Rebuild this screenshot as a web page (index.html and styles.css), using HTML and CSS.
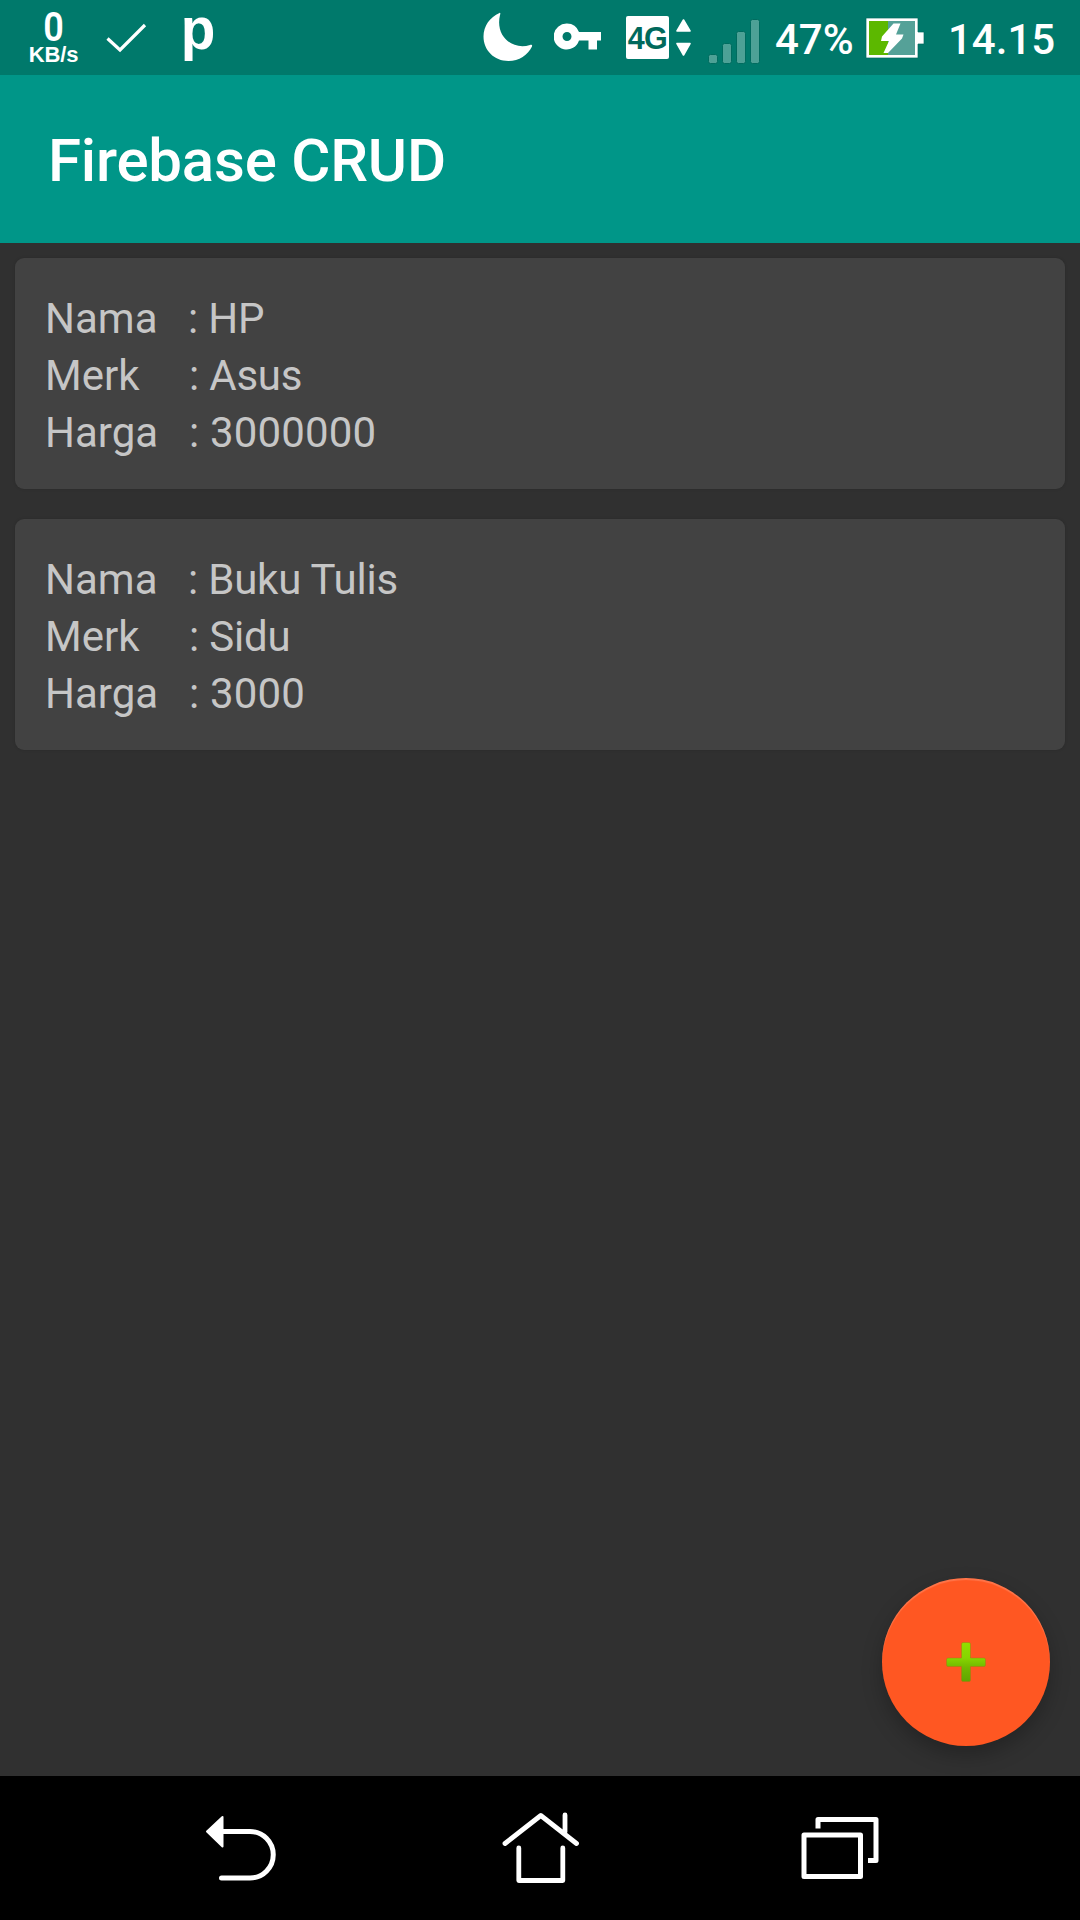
FILE: index.html
```html
<!DOCTYPE html>
<html lang="id">
<head>
<meta charset="utf-8">
<title>Firebase CRUD</title>
<link rel="stylesheet" href="styles.css">
</head>
<body>
<div class="screen">
  <div class="status-bar">
    <div class="net-speed"><span class="net-value">0</span><span class="net-unit">KB/s</span></div>
    <svg class="icon-check" width="42" height="75" viewBox="105 0 42 75"><path d="M107.5 38.5 120 50 145 25" fill="none" stroke="#fff" stroke-width="3.2"/></svg>
    <span class="app-letter">p</span>
    <div class="spacer"></div>
    <svg class="icon-moon" width="50" height="75" viewBox="483 0 50 75"><path d="M499.5 13C490 17 483.5 26 483.5 36.500C483.500 50 494 61 508.500 61C519 61 528 55 532 46.500C532.500 45 531.500 44.500 530 45C512 50.500 495 36 500 15C500.500 13.500 500.500 12.500 499.500 13Z" fill="#fff"/></svg>
    <svg class="icon-key" width="48" height="75" viewBox="554 0 48 75"><path fill="#fff" fill-rule="evenodd" d="M567 23.500A13 13 0 0 1 579 32H601V40.500H597V49.500H588.500V40.500H579A13 13 0 1 1 567 23.500ZM567 32A4.500 4.500 0 1 0 567 41A4.500 4.500 0 1 0 567 32Z"/></svg>
    <div class="network">4G</div>
    <svg class="icon-data" width="17" height="75" viewBox="675 0 17 75"><path d="M683.500 20 690 31H677ZM677 43.500H690L683.500 55Z" fill="#fff" stroke="#fff" stroke-width="1.600" stroke-linejoin="round"/></svg>
    <svg class="icon-signal" width="54" height="75" viewBox="707 0 54 75"><g fill="#4da196" stroke="#006c5f"><rect x="708.500" y="54.500" width="9" height="9" rx="2"/><rect x="722.500" y="43.500" width="9" height="20" rx="2"/><rect x="736.500" y="31.500" width="9" height="32" rx="2"/><rect x="750.500" y="19.500" width="9" height="44" rx="2"/></g></svg>
    <span class="percent">47%</span>
    <svg class="icon-battery" width="60" height="75" viewBox="865 0 60 75"><path d="M866 18H918V32H924V44H918V58H866Z" fill="#fff" stroke="#006c5f" stroke-width=".7"/><path d="M869 21H888V55H869Z" fill="#5cb800"/><path d="M888 21H915V55H888Z" fill="#55a198"/><path d="M893.500 23.500H900.500L896 34.500H903.500L902 38.500 888 53H883.500L889 41H881L882 36.500Z" fill="#fff"/></svg>
    <span class="clock">14.15</span>
  </div>
  <header class="app-bar"><h1 class="title">Firebase CRUD</h1></header>
  <main class="content">
    <article class="card">
      <div class="row"><span class="label">Nama</span><span class="value first">: HP</span></div>
      <div class="row"><span class="label">Merk</span><span class="value">: Asus</span></div>
      <div class="row"><span class="label">Harga</span><span class="value number">: 3000000</span></div>
    </article>
    <article class="card">
      <div class="row"><span class="label">Nama</span><span class="value first">: Buku Tulis</span></div>
      <div class="row"><span class="label">Merk</span><span class="value">: Sidu</span></div>
      <div class="row"><span class="label">Harga</span><span class="value number">: 3000</span></div>
    </article>
    <button class="fab" aria-label="Tambah">
      <svg width="42" height="42" viewBox="945 1641 42 42"><defs><linearGradient id="plus" x1="0" y1="0" x2="0" y2="1"><stop offset="0" stop-color="#91e000"/><stop offset=".4" stop-color="#87d400"/><stop offset=".65" stop-color="#70b800"/><stop offset="1" stop-color="#60a500"/></linearGradient></defs><path d="M963 1642.500H969Q970.500 1642.500 970.500 1644V1658H984Q985.500 1658 985.500 1659.500V1665Q985.500 1666.500 984 1666.500H970.500V1680Q970.500 1681.500 969 1681.500H963Q961.500 1681.500 961.500 1680V1666.500H948Q946.500 1666.500 946.500 1665V1659.500Q946.500 1658 948 1658H961.500V1644Q961.500 1642.500 963 1642.500Z" fill="url(#plus)" stroke="#a07a10" stroke-opacity=".6" stroke-width=".8"/></svg>
    </button>
  </main>
  <nav class="nav-bar">
    <svg width="80" height="80" viewBox="200 1806 80 80"><path d="M222 1831.500H250A23.250 23.250 0 0 1 250 1878H221.500" fill="none" stroke="#fff" stroke-width="5" stroke-linecap="round"/><path d="M207 1831.500 222.500 1817V1846.500Z" fill="#fff" stroke="#fff" stroke-width="2" stroke-linejoin="round"/></svg>
    <svg width="80" height="80" viewBox="500 1806 80 80"><path d="M505 1843.500 540.800 1815.500 576.500 1843.500M565 1815V1832M518.800 1848V1880.500H562.800V1848" fill="none" stroke="#fff" stroke-width="4.800" stroke-linecap="round" stroke-linejoin="round"/></svg>
    <svg width="80" height="80" viewBox="800 1806 80 80"><path d="M804 1835H860.500V1876.500H804ZM818 1828.500V1819.500H876V1860.500H868" fill="none" stroke="#fff" stroke-width="5" stroke-linejoin="round"/></svg>
  </nav>
</div>
</body>
</html>
```
FILE: styles.css
```css
* { box-sizing: border-box; }

body {
  margin: 0;
  background: #303030;
  font-family: Roboto, sans-serif;
}

svg { display: block; flex: none; }

.screen {
  display: flex;
  flex-direction: column;
  width: 1080px;
  height: 1920px;
  overflow: hidden;
}

.status-bar {
  display: flex;
  flex: none;
  height: 75px;
  padding: 0 25px 0 28px;
  background: #00796b;
  color: #fff;
}

.net-speed {
  display: flex;
  flex-direction: column;
  align-items: center;
  width: 51px;
  padding-top: 10px;
}

.net-value {
  font-size: 40px;
  font-weight: 600;
  line-height: 35px;
  transform: scaleX(.9);
}

.net-unit {
  font: bold 22px/20px "Liberation Sans", sans-serif;
  letter-spacing: -.1px;
}

.icon-check { margin-left: 26px; }

.app-letter {
  margin-left: 33px;
  font: bold 59px/59px "Liberation Sans", sans-serif;
  transform: scaleX(.96);
}

.spacer { flex: 1; }

.icon-key { margin-left: 21px; }

.network {
  width: 43px;
  height: 43px;
  margin: 16px 0 0 24px;
  border-radius: 2px;
  background: #fff;
  color: #00695c;
  font: bold 30.500px/45px "Liberation Sans", sans-serif;
  letter-spacing: -.5px;
  text-align: center;
}

.icon-data { margin-left: 6px; }

.icon-signal { margin-left: 15px; }

.percent,
.clock {
  font-size: 42px;
  font-weight: 500;
  line-height: 80px;
  white-space: nowrap;
}

.percent {
  width: 79px;
  margin-left: 14px;
}

.icon-battery { margin-left: 11px; }

.clock {
  width: 107px;
  margin-left: 23px;
}

.app-bar {
  display: flex;
  flex: none;
  align-items: center;
  height: 168px;
  padding-left: 48px;
  background: #009688;
}

.title {
  margin: 0;
  padding-top: 4px;
  color: #fff;
  font-size: 60px;
  font-weight: 500;
  letter-spacing: -.2px;
  line-height: 70px;
}

.content {
  position: relative;
  display: flex;
  flex: 1;
  flex-direction: column;
  gap: 30px;
  padding: 15px;
  overflow: hidden;
}

.card {
  height: 231px;
  padding: 32px 30px 0;
  border-radius: 9px;
  background: #424242;
  box-shadow: 0 0 3px rgba(0, 0, 0, .15);
}

.row {
  display: flex;
  height: 57px;
  color: #c6c6c6;
  font-size: 42px;
  line-height: 57px;
}

.label { width: 144px; }

.value {
  letter-spacing: -.2px;
  white-space: pre;
}

.value.first { margin-left: -1px; }

.value.number { letter-spacing: .15px; }

.fab {
  position: absolute;
  right: 30px;
  bottom: 30px;
  display: grid;
  place-items: center;
  width: 168px;
  height: 168px;
  padding: 0;
  border: 0;
  border-radius: 50%;
  background: #ff5722;
  box-shadow: 0 9px 20px rgba(0, 0, 0, .25), inset 0 2px 1px rgba(255, 255, 255, .18);
}

.nav-bar {
  display: grid;
  flex: none;
  grid-template-columns: repeat(3, 300px);
  align-items: center;
  justify-content: center;
  justify-items: center;
  height: 144px;
  padding-bottom: 4px;
  background: #000;
}
```
